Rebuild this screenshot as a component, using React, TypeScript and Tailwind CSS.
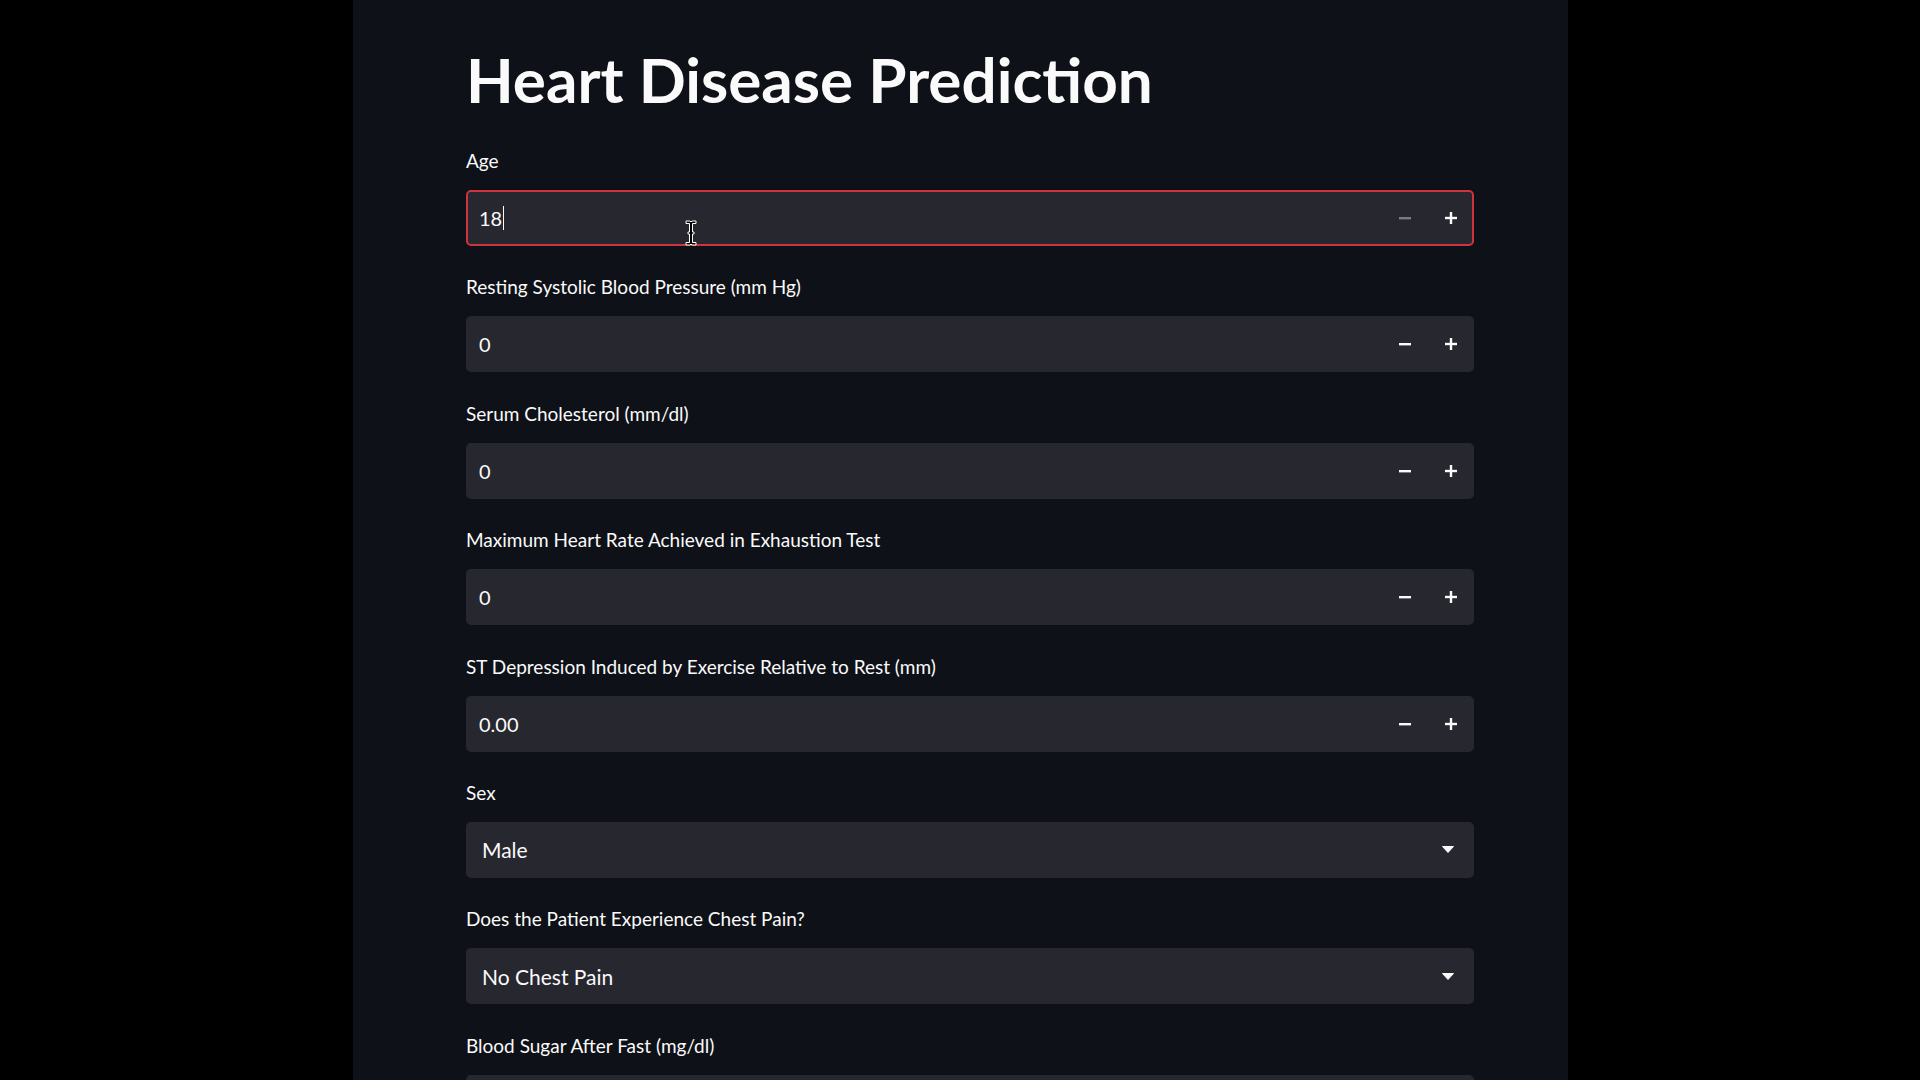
import React from "react";

const FONT = { fontFamily: "Lato, 'Noto Sans', sans-serif" };

const numberFields = [
  { label: "Resting Systolic Blood Pressure (mm Hg)", value: "0" },
  { label: "Serum Cholesterol (mm/dl)", value: "0" },
  { label: "Maximum Heart Rate Achieved in Exhaustion Test", value: "0" },
  { label: "ST Depression Induced by Exercise Relative to Rest (mm)", value: "0.00" },
];

const selectFields = [
  { label: "Sex", value: "Male" },
  { label: "Does the Patient Experience Chest Pain?", value: "No Chest Pain" },
  { label: "Blood Sugar After Fast (mg/dl)", value: "" },
];

function Minus({ dim = false }: { dim?: boolean }) {
  return (
    <svg width="12" height="12" viewBox="0 0 12 12">
      <rect x="0" y="5" width="12" height="2.4" fill={dim ? "#7a7b82" : "#fafafa"} />
    </svg>
  );
}

function Plus() {
  return (
    <svg width="12" height="12" viewBox="0 0 12 12" fill="#fafafa">
      <rect x="0" y="4.8" width="12" height="2.4" />
      <rect x="4.8" y="0" width="2.4" height="12" />
    </svg>
  );
}

function Label({ children }: { children: React.ReactNode }) {
  return (
    <div className="mb-[15px] h-[28px] text-[19px] leading-[28px] text-[#fafafa]">{children}</div>
  );
}

function NumberInput({ value, focused = false }: { value: string; focused?: boolean }) {
  return (
    <div
      className={
        focused
          ? "relative flex h-[56px] items-center rounded-[5px] border-2 border-[#d0333d] bg-[#26272f]"
          : "relative flex h-[56px] items-center rounded-[5px] border-2 border-[#26272f] bg-[#26272f]"
      }
    >
      <div className="flex flex-1 items-center pl-[11px] text-[20px] text-[#fafafa]">
        <span>{value}</span>
        {focused && <span className="ml-[1px] inline-block h-[24px] w-px bg-[#fafafa]" />}
      </div>
      <div className="-mr-[2px] flex h-full items-center">
        <div className="flex h-full w-[46px] items-center justify-center">
          <Minus dim={focused} />
        </div>
        <div className="flex h-full w-[46px] items-center justify-center">
          <Plus />
        </div>
      </div>
    </div>
  );
}

function Select({ value }: { value: string }) {
  return (
    <div className="flex h-[56px] items-center justify-between rounded-[5px] bg-[#26272f] pl-[16px] pr-[20px]">
      <span className="text-[21px] text-[#fafafa]">{value}</span>
      <svg width="12" height="7" viewBox="0 0 12 7">
        <path d="M0.5 0.5 H11.5 L6 6.5 Z" fill="#fafafa" stroke="#fafafa" strokeLinejoin="round" />
      </svg>
    </div>
  );
}

export default function App() {
  return (
    <div className="h-[1080px] w-[1920px] overflow-hidden bg-black" style={FONT}>
      <div className="relative ml-[353px] h-[1080px] w-[1215px] bg-[#0e1117]">
        <div className="ml-[113px] w-[1008px] pt-[42px]">
          <h1 className="mb-[31px] text-[62px] font-bold leading-[74px] text-[#fafafa]">
            Heart Disease Prediction
          </h1>

          <div className="flex flex-col gap-[27.4px]">
            <div>
              <Label>Age</Label>
              <NumberInput value="18" focused />
            </div>
            {numberFields.map((f) => (
              <div key={f.label}>
                <Label>{f.label}</Label>
                <NumberInput value={f.value} />
              </div>
            ))}
            {selectFields.map((f) => (
              <div key={f.label}>
                <Label>{f.label}</Label>
                <Select value={f.value} />
              </div>
            ))}
          </div>
        </div>

        {/* mouse text cursor over the Age input */}
        <svg
          className="pointer-events-none absolute left-[332px] top-[220px]"
          width="12"
          height="26"
          viewBox="0 0 12 26"
        >
          <path
            d="M1 1 H5 L6 2 L7 1 H11 V3.5 H7.5 V12 H9 V14 H7.5 V22.5 H11 V25 H7 L6 24 L5 25 H1 V22.5 H4.5 V14 H3 V12 H4.5 V3.5 H1 Z"
            fill="#000"
            stroke="#fff"
            strokeWidth="1"
            strokeLinejoin="round"
          />
        </svg>
      </div>
    </div>
  );
}
